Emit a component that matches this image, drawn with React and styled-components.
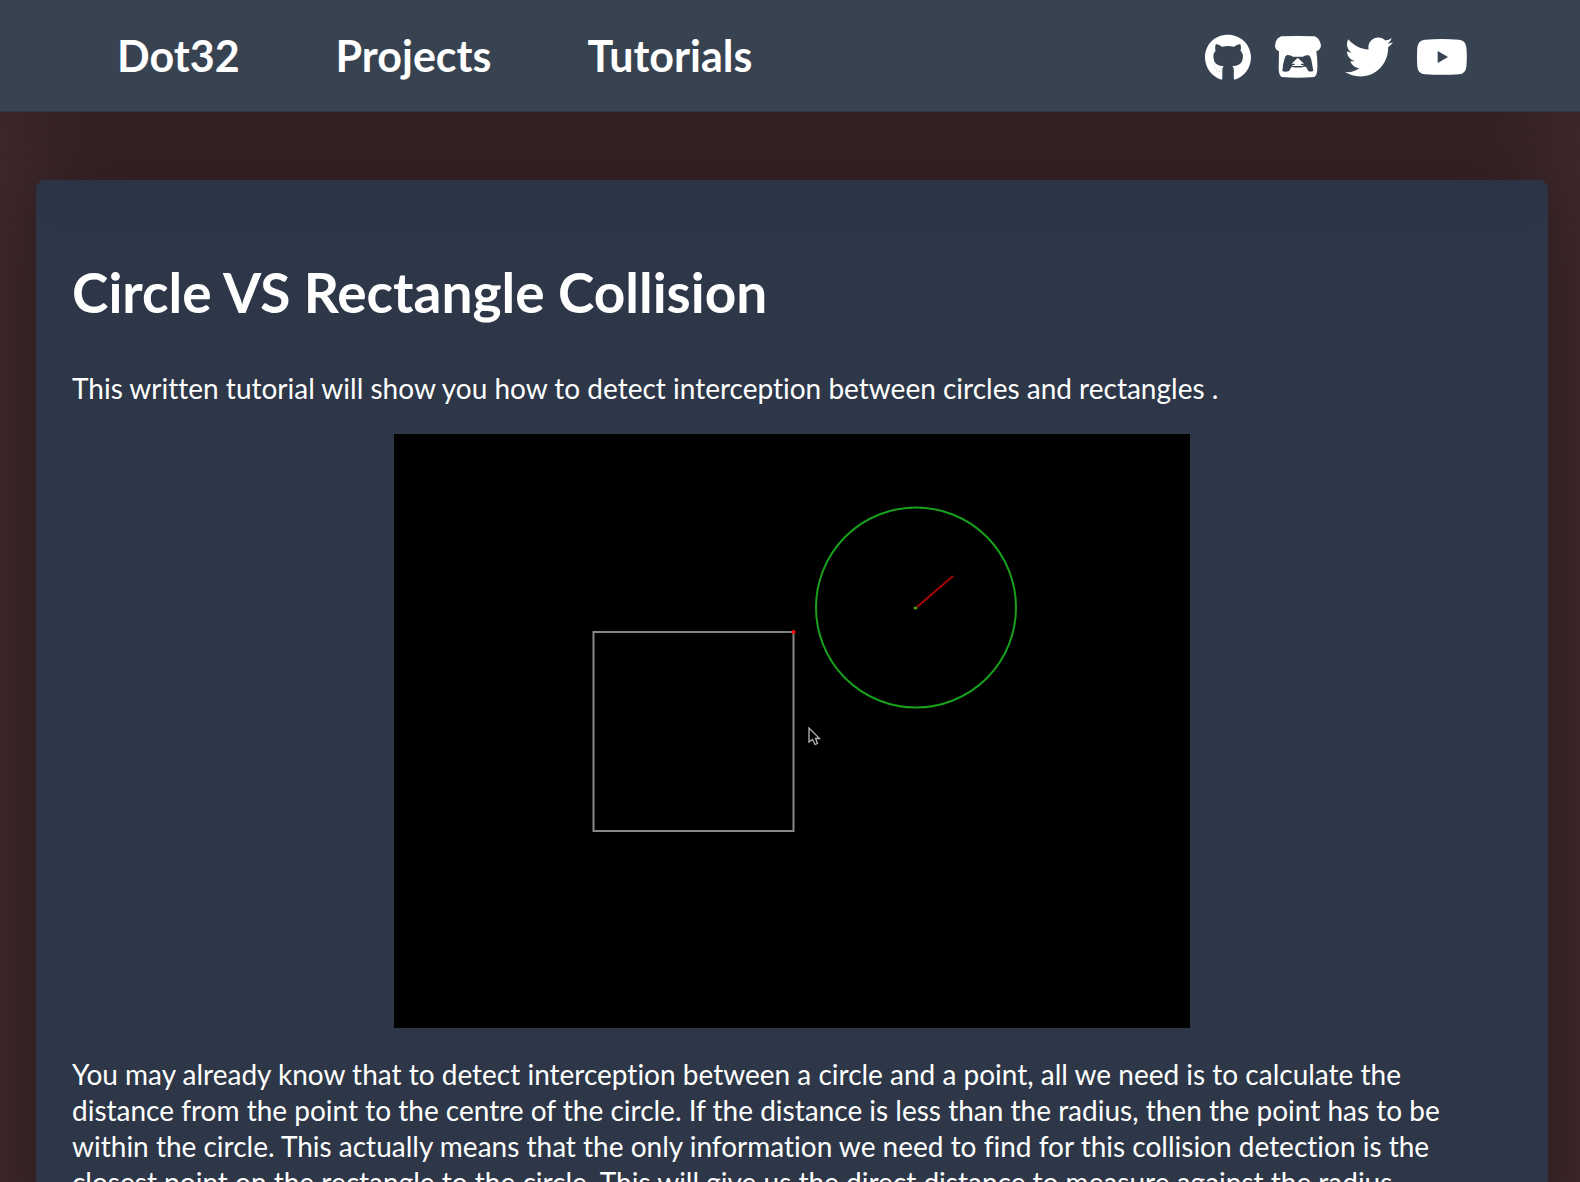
import React from "react";
import styled, { createGlobalStyle } from "styled-components";
import { FaTwitter } from "react-icons/fa";

const GlobalStyle = createGlobalStyle`
  *, *::before, *::after { box-sizing: border-box; }
  body {
    margin: 0;
    background: #412a2c;
    color: #fff;
    font-family: Lato, "Open Sans", sans-serif;
    font-size: 28px;
    font-variant-ligatures: none;
    line-height: 36px;
  }
`;

const Page = styled.div`
  height: 100vh;
  overflow: hidden;
`;

const NavBar = styled.header`
  position: relative;
  z-index: 1;
  display: flex;
  align-items: center;
  justify-content: space-between;
  height: 112px;
  padding: 0 113px 0 72px;
  background: #384352;
  border-bottom: 1px solid #35373f;
  box-shadow: 0 45px 90px -22px rgba(0, 0, 0, 0.34);
`;

const NavLinks = styled.nav`
  display: flex;
  gap: 6px;
`;

const NavLink = styled.a`
  padding: 0 45px;
  color: inherit;
  font-size: 43px;
  font-weight: 700;
  line-height: 60px;
  text-decoration: none;
`;

const SocialLinks = styled.nav`
  display: flex;
  align-items: center;
  gap: 24px;
  padding-top: 2px;
`;

const SocialLink = styled.a`
  display: flex;
  color: inherit;

  svg {
    width: ${({ $size }) => $size}px;
    height: ${({ $size }) => $size}px;
    fill: currentColor;
  }
`;

const Article = styled.main`
  margin: 68px 32px 36px 36px;
  padding: 76px 36px 36px;
  background: #2d3748;
  border-radius: 9px;
  box-shadow: 0 0 90px rgba(0, 0, 0, 0.44);
`;

const Title = styled.h1`
  margin: 0 0 42px;
  font-size: 55px;
  font-weight: 700;
  line-height: 72px;
`;

const Paragraph = styled.p`
  margin: 28px 0;
  padding-right: 36px;
`;

const Demo = styled.svg`
  display: block;
  width: 796px;
  max-width: 100%;
  height: auto;
  margin: 0 auto;
  background: #000;
`;

function GitHubIcon() {
  return (
    <svg viewBox="0 0 496 496" aria-hidden="true">
      <path d="M244.800 8C106.100 8 0 113.300 0 252c0 110.900 69.800 205.800 169.500 239.200 12.800 2.300 17.300-5.600 17.300-12.100 0-6.200-.3-40.400-.3-61.400L187.100 382.600c2.300-16 8.800-27.100 16-33.700-55.900-6.200-112.300-14.300-112.300-110.500 0-27.500 7.600-41.300 23.600-58.900-2.600-6.500-11.100-33.300 2.600-67.900 20.900-6.500 69 27 69 27 20-5.600 41.500-8.500 62.800-8.500s42.800 2.900 62.800 8.500c0 0 48.100-33.600 69-27 13.700 34.700 5.200 61.400 2.600 67.900 16 17.700 25.800 31.500 25.800 58.900 0 96.500-58.900 104.200-114.800 110.400 9.200 7.900 17 22.900 17 46.400 0 33.700-.3 75.400-.3 83.600 0 6.500 4.600 14.400 17.300 12.100C428.200 457.800 496 362.900 496 252 496 113.300 383.500 8 244.800 8z" />
      <path
        d="M98 352l14 12l12 22l20 16h36"
        fill="none"
        stroke="#384352"
        strokeWidth="6"
        strokeDasharray="10 10"
        strokeOpacity="0.5"
      />
    </svg>
  );
}

function ItchIcon() {
  return (
    <svg viewBox="284 102 138 138" aria-hidden="true">
      <path
        fillRule="evenodd"
        d="M302 109Q352 107 404 109L414 116Q421 126 422 137Q420 150 408 154Q412 175 411 205Q411 226 402 231Q353 236 304 231Q295 226 295 205L296 154Q285 150 284 137Q284 126 291 116ZM320 165Q330 164 338 170H367Q375 164 385 166Q391 168 394 185L399 212Q392 217 384 213L377 200H371Q352 205 334 200L326 213Q314 217 306 213Q308 190 313 175Q315 167 320 165Z"
      />
      <path d="M352 173L371 191H362V195H369V198H336V195H343V191H334Z" />
    </svg>
  );
}

function YouTubeIcon() {
  return (
    <svg viewBox="711 96 150 150" aria-hidden="true">
      <path
        fillRule="evenodd"
        d="M735 119Q786 115 837 119Q857 121 859 142Q862 171 859 200Q857 221 837 223Q786 226 735 223Q714 221 712 200Q710 171 712 142Q714 121 735 119ZM773 153V189L804 171Z"
      />
    </svg>
  );
}

const socials = [
  { name: "GitHub", Icon: GitHubIcon, size: 46 },
  { name: "itch.io", Icon: ItchIcon, size: 46 },
  { name: "Twitter", Icon: FaTwitter, size: 48 },
  { name: "YouTube", Icon: YouTubeIcon, size: 50 },
];

function CollisionDemo() {
  return (
    <Demo viewBox="0 0 796 594" role="img" aria-label="Circle and rectangle collision demo">
      <rect x="199.5" y="198" width="200" height="199" fill="none" stroke="#868686" strokeWidth="2" />
      <circle cx="399.5" cy="198" r="2" fill="#ff0a14" />
      <circle cx="522" cy="173.5" r="100" fill="none" stroke="#18a01c" strokeWidth="2" />
      <path d="M523 173L559 142" stroke="#a80508" strokeWidth="2" />
      <ellipse cx="521.5" cy="174" rx="2" ry="1.5" fill="#4c9a10" />
      <path
        d="M415 294V308L418.500 305.500L421 310.500L423.500 309.500L421.500 304.500H425.500Z"
        fill="#000"
        stroke="#b8b8b8"
        strokeWidth="1.300"
      />
    </Demo>
  );
}

export default function App() {
  return (
    <Page>
      <GlobalStyle />
      <NavBar>
        <NavLinks aria-label="Main">
          <NavLink href="#home">Dot32</NavLink>
          <NavLink href="#projects">Projects</NavLink>
          <NavLink href="#tutorials">Tutorials</NavLink>
        </NavLinks>
        <SocialLinks aria-label="Social">
          {socials.map(({ name, Icon, size }) => (
            <SocialLink key={name} href={`#${name}`} aria-label={name} $size={size}>
              <Icon />
            </SocialLink>
          ))}
        </SocialLinks>
      </NavBar>
      <Article>
        <Title>Circle VS Rectangle Collision</Title>
        <Paragraph>
          This written tutorial will show you how to detect interception between circles and rectangles .
        </Paragraph>
        <CollisionDemo />
        <Paragraph>
          You may already know that to detect interception between a circle and a point, all we need is to
          calculate the distance from the point to the centre of the circle. If the distance is less than the
          radius, then the point has to be within the circle. This actually means that the only information we
          need to find for this collision detection is the closest point on the rectangle to the circle. This
          will give us the direct distance to measure against the radius.
        </Paragraph>
      </Article>
    </Page>
  );
}
